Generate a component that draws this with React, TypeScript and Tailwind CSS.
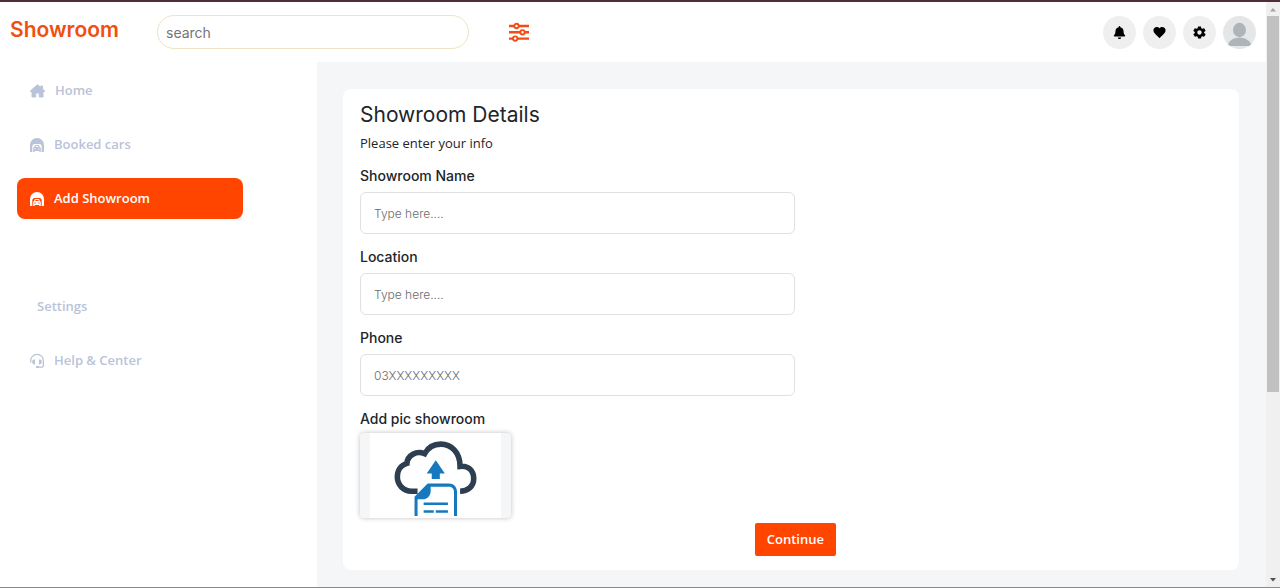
import React from "react";
import { FaBell } from "react-icons/fa";
import { IoMdHeart, IoMdSettings } from "react-icons/io";

function HomeIcon() {
  return (
    <svg viewBox="0 0 17 16" className="h-4 w-[17px]" fill="currentColor" stroke="currentColor" strokeLinejoin="round" aria-hidden="true">
      <path d="M8.500 1.800 1.500 7.800v.7H3V14h3.700v-4h3.600v4H14V8.500h1.500v-.7l-2-1.700V3h-1.700v1.600z" />
    </svg>
  );
}

function GarageIcon() {
  return (
    <svg viewBox="0 0 16 16" className="size-4" fill="currentColor" aria-hidden="true">
      <path d="M1 15V8a7 7 0 0 1 14 0v7h-2.300V9.500A2.500 2.500 0 0 0 10.200 7H5.800a2.500 2.500 0 0 0-2.500 2.500V15z" />
      <path
        fillRule="evenodd"
        d="M6 7.900h4l.9 2.200c.6.2.9.6.9 1.200V15h-1.500v-.9H5.700v.9H4.200v-3.700c0-.6.300-1 .9-1.200zm.7 1-.4 1.100h3.400l-.4-1.100zM5.400 11.400v1.100h1.300v-1.100zm3.900 0v1.100h1.300v-1.100z"
      />
    </svg>
  );
}

function SupportIcon() {
  return (
    <svg viewBox="0 0 16 16" className="size-4" fill="none" stroke="currentColor" strokeWidth="1.300" strokeLinecap="round" aria-hidden="true">
      <path d="M1.700 9V7.600a6.300 6.300 0 0 1 12.600 0v5.100a1.500 1.500 0 0 1-1.500 1.500H9" />
      <path fill="currentColor" stroke="none" d="M3.200 8.600C3.200 7.300 4 6.400 5 6.400h1v5H5c-1 0-1.800-1-1.800-2.800zM10 6.400h1c1 0 1.800.9 1.800 2.200 0 1.800-.8 2.800-1.800 2.800h-1z" />
      <path strokeWidth="2" d="M7.800 14h1.300" />
    </svg>
  );
}

function SlidersIcon() {
  return (
    <svg viewBox="0 0 20 20" className="h-5 w-5" fill="none" stroke="currentColor" strokeWidth="2.400" aria-hidden="true">
      <path d="M0 4h5.300M9.700 4H20M0 10.300h11.300M15.700 10.300H20M0 16.600h4M8.400 16.600H20" />
      <circle cx="7.500" cy="4" r="2.200" strokeWidth="1.900" />
      <circle cx="13.500" cy="10.300" r="2.200" strokeWidth="1.900" />
      <circle cx="6.200" cy="16.600" r="2.200" strokeWidth="1.900" />
    </svg>
  );
}

function UploadPicture() {
  return (
    <svg viewBox="0 0 130 84" className="h-full" fill="none" aria-hidden="true">
      <path fill="#fff" d="M0 0h130v84H0z" />
      <path
        stroke="#2c3e50"
        strokeWidth="5.500"
        d="M47 57.500h-6C33 57.500 27 51 27 43.500c0-7 4-12 9.500-13.500C37 22 46 17 54 20.500C58 13 65 11 70 11c10 0 19 8 19 22 8-1 13.500 4 13.500 12 0 8-6 12.500-13.500 12.500"
      />
      <path fill="#1678bf" d="M65 27l9 13h-5v5.500h-8V40h-5z" />
      <path
        fill="#1678bf"
        fillRule="evenodd"
        d="M57 50h21c4.500 0 8 3.500 8 8v24h-3V58c0-3-2-5-5-5H60v4c0 5-3.500 8.500-8 8.500h-5V82h-3V63z"
      />
      <path stroke="#1678bf" strokeWidth="2.500" d="M53 70h24M53 77.500h10M65 77.500h12" />
    </svg>
  );
}

function Avatar() {
  return (
    <svg viewBox="0 0 33 33" className="size-full" aria-hidden="true">
      <path fill="#e4e6e7" d="M0 0h33v33H0z" />
      <ellipse cx="16.500" cy="14" rx="6.500" ry="7.200" fill="#aeb4b7" />
      <path fill="#aeb4b7" d="M4.500 30c1-5 6-8.500 12-8.500s11 3.500 12 8.500z" />
    </svg>
  );
}

const actions = [
  { label: "Notifications", icon: <FaBell size={13} /> },
  { label: "Favourites", icon: <IoMdHeart size={15} /> },
  { label: "Settings", icon: <IoMdSettings size={15} /> },
];

const fields = [
  { id: "name", label: "Showroom Name", hint: "Type here....", type: "text" },
  { id: "location", label: "Location", hint: "Type here....", type: "text" },
  { id: "phone", label: "Phone", hint: "03XXXXXXXXX", type: "tel" },
];

function NavItem({ label, icon, active, className = "" }: {
  label: string;
  icon?: React.ReactNode;
  active?: boolean;
  className?: string;
}) {
  return (
    <li className={className}>
      <a
        href="#"
        aria-current={active ? "page" : undefined}
        className={`flex h-[41px] items-center gap-[9px] rounded-lg text-[13px] font-semibold ${icon ? "px-3" : "px-5"} ${
          active ? "bg-[#ff4500] text-white" : "text-[#b9c3d9]"
        }`}
      >
        {icon}
        {label}
      </a>
    </li>
  );
}

export default function App() {
  return (
    <div className="flex min-h-screen border-t-2 border-b border-t-[#4f2f35] border-b-[#8a8a8a] bg-white font-['Open_Sans',sans-serif] text-[#212529]">
      <div className="flex min-w-0 flex-1 flex-col">
        <header className="flex h-[60px] items-center px-[10px]">
          <a href="#" className="w-[147px] pb-1 font-['Inter',sans-serif] text-[21px] leading-7 font-semibold text-[#f0500f]">
            Showroom
          </a>
          <input
            type="search"
            aria-label="search"
            placeholder="search"
            className="h-[34px] w-[312px] rounded-full border border-[#efe3c4] px-2 font-['Inter',sans-serif] text-sm outline-none placeholder:text-[#757575]"
          />
          <button type="button" aria-label="Filters" className="ml-10 text-[#f04e14]">
            <SlidersIcon />
          </button>
          <div className="ml-auto flex gap-[7px]">
            {actions.map((a) => (
              <button
                key={a.label}
                type="button"
                aria-label={a.label}
                className="flex size-[33px] items-center justify-center rounded-full bg-[#efefef] text-black"
              >
                {a.icon}
              </button>
            ))}
            <button type="button" aria-label="Profile" className="size-[33px] overflow-hidden rounded-full">
              <Avatar />
            </button>
          </div>
        </header>

        <div className="flex flex-1">
          <nav className="w-[317px] shrink-0 pt-2 pl-[17px]">
            <ul className="flex w-[226px] flex-col gap-[13px]">
              <NavItem label="Home" icon={<HomeIcon />} />
              <NavItem label="Booked cars" icon={<GarageIcon />} />
              <NavItem label="Add Showroom" icon={<GarageIcon />} active />
              <NavItem label="Settings" className="mt-[54px]" />
              <NavItem label="Help & Center" icon={<SupportIcon />} />
            </ul>
          </nav>

          <main className="min-w-0 flex-1 bg-[#f5f6f8] pt-[27px] pr-[27px] pb-[17px] pl-[26px]">
            <form className="rounded-lg bg-white px-[17px] pt-3 pb-[14px]" onSubmit={(e) => e.preventDefault()}>
              <h1 className="font-['Inter',sans-serif] text-[21px] leading-7">Showroom Details</h1>
              <p className="mt-1 text-[13px] leading-5">Please enter your info</p>
              <div className="mt-[13px] flex flex-col gap-[13px]">
                {fields.map((f) => (
                  <div key={f.id} className="flex flex-col gap-[6px] font-['Inter',sans-serif]">
                    <label htmlFor={f.id} className="text-[14px] leading-5 font-medium">
                      {f.label}
                    </label>
                    <input
                      id={f.id}
                      type={f.type}
                      placeholder={f.hint}
                      className="h-[42px] w-[435px] rounded-md border border-[#dee0e3] px-[13px] text-xs font-light outline-none placeholder:text-[#6c6c6c]"
                    />
                  </div>
                ))}
              </div>
              <div className="mt-[13px] font-['Inter',sans-serif]">
                <label htmlFor="pic" className="block text-[14px] leading-5 font-medium">
                  Add pic showroom
                </label>
                <label
                  htmlFor="pic"
                  className="mt-1 flex h-[85px] w-[151px] cursor-pointer justify-center overflow-hidden rounded-sm bg-[#f5f6f8] shadow-[0_0_5px_rgba(0,0,0,0.25)]"
                >
                  <UploadPicture />
                </label>
                <input id="pic" type="file" accept="image/*" className="sr-only" />
              </div>
              <div className="mt-[5px] flex w-[476px] justify-end">
                <button type="submit" className="h-[33px] rounded-xs bg-[#ff4500] px-3 text-[13px] font-semibold text-white">
                  Continue
                </button>
              </div>
            </form>
          </main>
        </div>
      </div>

      <div className="flex w-[14px] shrink-0 flex-col items-center bg-[#f0f0f0]" aria-hidden="true">
        <svg viewBox="0 0 14 14" className="size-[14px]">
          <path fill="#a3a3a3" d="M4 9.500 7 6l3 3.500z" />
        </svg>
        <div className="flex w-full flex-1 justify-center">
          <div className="h-[67.5%] w-3 bg-[#c1c1c1]" />
        </div>
        <svg viewBox="0 0 14 14" className="size-[14px]">
          <path fill="#505050" d="M4 5l3 3.500L10 5z" />
        </svg>
      </div>
    </div>
  );
}
